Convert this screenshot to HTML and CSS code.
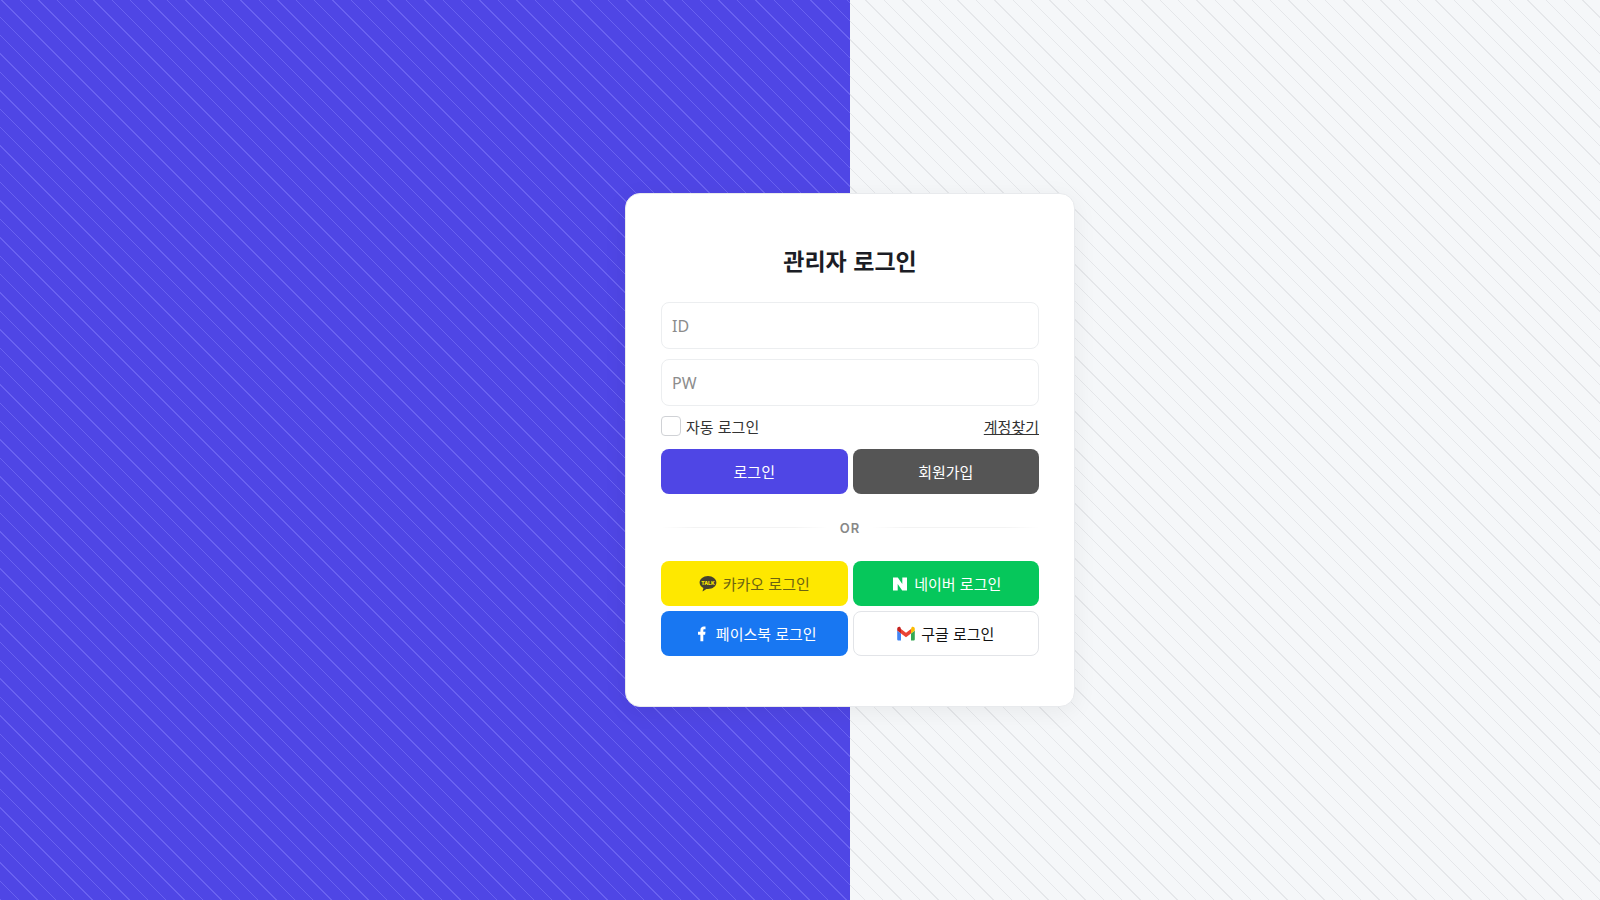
FILE: index.html
```
<!doctype html>
<html lang="ko">

<head>
	<title>관리자 로그인</title>
	<meta charset="utf-8">
	<meta name="viewport" content="width=device-width, initial-scale=1.0">
	<link rel="stylesheet" href="styles.css">
</head>

<body>
	<div class="side"></div>
	<main class="login">
		<form class="card">
			<h1>관리자 로그인</h1>
			<div class="fields">
				<input class="field" type="text" name="id" placeholder="ID" aria-label="ID">
				<input class="field" type="password" name="pw" placeholder="PW" aria-label="PW">
			</div>
			<div class="options">
				<label class="auto" for="auto"><input type="checkbox" id="auto"> 자동 로그인</label>
				<a href="#">계정찾기</a>
			</div>
			<div class="buttons">
				<button class="btn primary" type="submit">로그인</button>
				<button class="btn join" type="button">회원가입</button>
			</div>
			<div class="or">OR</div>
			<div class="buttons">
				<button class="btn kakao" type="button">
					<svg class="icon" width="18" height="18" viewBox="0 0 18 18" aria-hidden="true">
						<path fill="#45412f" d="M9 1C4.300 1 .6 4 .6 7.600c0 2.300 1.500 4.300 3.800 5.500L3.600 16c-.1.3.2.5.4.3l3.400-2.300c.5.1 1 .1 1.600.1 4.700 0 8.400-2.900 8.400-6.500S13.700 1 9 1z" />
						<text x="9" y="9.500" text-anchor="middle">TALK</text>
					</svg>
					카카오 로그인
				</button>
				<button class="btn naver" type="button">
					<svg class="icon" width="18" height="18" viewBox="0 0 18 18" aria-hidden="true">
						<path fill="#fff" d="M3 2.500h4.800l4.500 6.500V2.500H17v13h-4.800L7.700 9v6.500H3z" />
					</svg>
					네이버 로그인
				</button>
				<button class="btn facebook" type="button">
					<svg class="icon" width="18" height="18" viewBox="0 0 18 18" aria-hidden="true">
						<path fill="#fff" d="M8.400 16.200V9.700H6V6.800h2.400V5.200c0-2.400 1.400-3.700 3.500-3.700.9 0 1.600.1 1.600.1v2.600h-1c-1 0-1.200.6-1.200 1.200v1.400h2.200l-.4 2.900h-1.800v6.500z" />
					</svg>
					페이스북 로그인
				</button>
				<button class="btn google" type="button">
					<svg class="icon" width="18" height="18" viewBox="0 0 18 18" aria-hidden="true">
						<path fill="#4285f4" d="M1.500 15.500H4V8.500L.2 5.500v8.700c0 .7.600 1.300 1.300 1.300z" />
						<path fill="#34a853" d="M14 15.500h2.500c.7 0 1.300-.6 1.300-1.300V5.500L14 8.500z" />
						<path fill="#fbbc04" d="M14 4v4.500l3.800-3V3.900c0-1.900-1.900-2.700-3.200-1.700z" />
						<path fill="#ea4335" d="M4 8.500V4l5 3.800L14 4v4.500l-5 3.800z" />
						<path fill="#c5221f" d="M.2 3.900v1.600l3.800 3V4l-.6-1.800C2.100 1.200.2 2 .2 3.900z" />
					</svg>
					구글 로그인
				</button>
			</div>
		</form>
	</main>
</body>

</html>
```
FILE: styles.css
```
*
{
	box-sizing: border-box;
}

body
{
	margin: 0;
	min-height: 100vh;
	display: grid;
	grid-template-columns: calc(50% + 50px) 1fr;
	background: #f5f7f9;
	background-image: repeating-linear-gradient(45deg, #e5e7ea 0 1px, transparent 1px 13px);
	font-family: "Noto Sans CJK KR", sans-serif;
	font-size: 15px;
	color: #333;
}

/* colored half of the background */
.side
{
	grid-area: 1 / 1;
	background: #4f46e5;
	background-image: repeating-linear-gradient(45deg, #6961f1 0 1px, transparent 1px 13px);
}

.login
{
	grid-area: 1 / 1 / 2 / 3;
	display: flex;
	align-items: center;
	justify-content: center;
	padding-left: 100px;
}

.card
{
	width: 100%;
	max-width: 450px;
	padding: 50px 35px;
	background: white;
	border: 1px solid #e8eaed;
	border-radius: 15px;
	box-shadow: 0 5px 25px rgba(0, 0, 0, 0.06);
}

h1
{
	margin: 0 0 26px;
	font-size: 23px;
	line-height: 32px;
	font-weight: bold;
	text-align: center;
	color: #1b1d25;
}

.fields
{
	display: grid;
	gap: 10px;
}

.field
{
	width: 100%;
	height: 47px;
	padding: 0 10px;
	border: 1px solid #eceef0;
	border-radius: 8px;
	font-family: "Noto Sans", "Noto Sans CJK KR", sans-serif;
	font-size: 16px;
}

.field::placeholder
{
	color: #8c8c8c;
}

.options
{
	display: flex;
	align-items: center;
	justify-content: space-between;
	height: 20px;
	margin: 10px 0 13px;
}

.auto
{
	display: flex;
	align-items: center;
	gap: 5px;
}

.auto input
{
	appearance: none;
	width: 20px;
	height: 20px;
	margin: 0;
	border: 1px solid #d0d2d6;
	border-radius: 4px;
	background: white;
}

.auto input:checked
{
	background: #4f46e5;
}

a
{
	color: #333;
}

.buttons
{
	display: grid;
	grid-template-columns: 1fr 1fr;
	gap: 5px;
}

.btn
{
	display: flex;
	align-items: center;
	justify-content: center;
	gap: 6px;
	height: 45px;
	padding: 0;
	border: none;
	border-radius: 8px;
	font-family: inherit;
	font-size: 15px;
	color: white;
	cursor: pointer;
}

.primary
{
	background: #4f46e5;
}

.join
{
	background: #555;
}

.kakao
{
	background: #fee800;
	color: #6b6312;
}

.naver
{
	background: #06c75b;
}

.facebook
{
	background: #1877f2;
}

.google
{
	background: white;
	border: 1px solid #e2e4e8;
	color: #111;
}

.icon text
{
	font-family: Inter, sans-serif;
	font-size: 5px;
	font-weight: 800;
	fill: #fee800;
}

.or
{
	display: flex;
	align-items: center;
	gap: 12px;
	height: 67px;
	font-family: Inter, sans-serif;
	font-size: 13px;
	font-weight: 600;
	letter-spacing: 1px;
	color: #888;
}

.or::before,
.or::after
{
	content: "";
	flex: 1;
	height: 1px;
	background: linear-gradient(90deg, transparent, #f3f3f3 20%, #f3f3f3 80%, transparent);
}
```
